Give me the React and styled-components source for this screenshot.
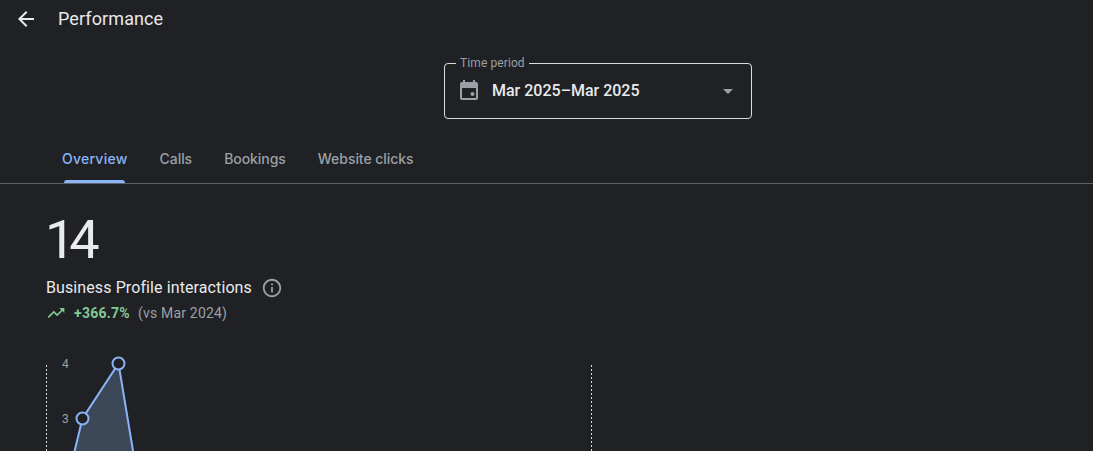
import React from "react";
import styled, { createGlobalStyle } from "styled-components";

const Global = createGlobalStyle`
  html, body { margin: 0; padding: 0; height: 100%; background: #202124; overflow: hidden; }
  body { font-family: Roboto, "Liberation Sans", sans-serif; }
`;

const Page = styled.div`
  width: 1093px;
  height: 451px;
  overflow: hidden;
  background: #202124;
  color: #e8eaed;
  display: flex;
  flex-direction: column;
`;

const Header = styled.header`
  display: flex;
  align-items: center;
  height: 38px;
  padding-left: 14px;
  gap: 20px;
  flex: none;
`;

const BackIcon = styled.svg`
  width: 24px;
  height: 24px;
  fill: #e8eaed;
  display: block;
`;

const Title = styled.h1`
  margin: 0;
  font: 400 18px/24px Roboto, sans-serif;
  letter-spacing: 0.1px;
  color: #e8eaed;
`;

const PeriodRow = styled.div`
  display: flex;
  padding: 25px 0 0 444px;
  flex: none;
`;

const PeriodBox = styled.div`
  position: relative;
  width: 308px;
  height: 56px;
  box-sizing: border-box;
  border: 1px solid #dadce0;
  border-radius: 4px;
  display: flex;
  align-items: center;
  padding: 0 12px;
`;

const PeriodLabel = styled.span`
  position: absolute;
  left: 11px;
  top: -9px;
  padding: 0 4px;
  background: #202124;
  font: 400 12px/16px Roboto, sans-serif;
  letter-spacing: 0.1px;
  color: #9aa0a6;
`;

const CalendarIcon = styled.svg`
  width: 24px;
  height: 24px;
  fill: #9aa0a6;
  flex: none;
  display: block;
`;

const PeriodValue = styled.span`
  margin-left: 11px;
  flex: 1;
  font: 500 16px/24px Roboto, sans-serif;
  color: #e8eaed;
`;

const Caret = styled.span`
  width: 0;
  height: 0;
  margin-right: 6px;
  border-left: 5px solid transparent;
  border-right: 5px solid transparent;
  border-top: 5px solid #9aa0a6;
`;

const Tabs = styled.nav`
  display: flex;
  height: 65px;
  padding-left: 46px;
  box-sizing: border-box;
  border-bottom: 1px solid #5f6368;
  flex: none;
`;

const Tab = styled.div`
  position: relative;
  padding: 30px 16px 0;
  display: flex;
  align-items: flex-start;
  font: 500 14px/20px Inter, Roboto, sans-serif;
  letter-spacing: ${(p) => (p.$active ? "0.25px" : "-0.05px")};
  color: ${(p) => (p.$active ? "#8ab4f8" : "#9aa0a6")};
`;

const TabBar = styled.span`
  position: absolute;
  left: 18px;
  right: 19px;
  bottom: 0;
  height: 3px;
  border-radius: 3px 3px 0 0;
  background: #8ab4f8;
`;

const Summary = styled.section`
  padding: 26px 0 0 46px;
  flex: none;
`;

const BigNumber = styled.div`
  font: 400 54px/60px Roboto, sans-serif;
  letter-spacing: -6px;
  margin-left: -1px;
  color: #e8eaed;
`;

const MetricRow = styled.div`
  display: flex;
  align-items: center;
  margin-top: 6px;
  height: 24px;
  gap: 9px;
`;

const MetricName = styled.span`
  font: 400 16px/24px Roboto, sans-serif;
  letter-spacing: 0.1px;
  color: #e8eaed;
`;

const InfoIcon = styled.svg`
  width: 22px;
  height: 22px;
  fill: #9aa0a6;
  display: block;
`;

const TrendRow = styled.div`
  display: flex;
  align-items: center;
  height: 20px;
  margin-top: 3px;
  font: 400 14px/20px Roboto, sans-serif;
  letter-spacing: 0.25px;
`;

const TrendIcon = styled.svg`
  width: 20px;
  height: 20px;
  fill: #81c995;
  display: block;
`;

const TrendValue = styled.span`
  margin-left: 8px;
  font-weight: 700;
  color: #81c995;
`;

const TrendNote = styled.span`
  margin-left: 8px;
  letter-spacing: 0.2px;
  color: #9aa0a6;
`;

const Chart = styled.svg`
  display: block;
  width: 1093px;
  height: 451px;
  flex: none;
  margin-top: 14px;
`;

const ChartLabel = styled.text`
  font: 400 12px Roboto, sans-serif;
  fill: #9aa0a6;
`;

export default function App() {
  return (
    <Page>
      <Global />
      <Header>
        <BackIcon viewBox="0 0 24 24">
          <path d="M20 11H7.83l5.59-5.59L12 4l-8 8 8 8 1.41-1.41L7.83 13H20v-2z" />
        </BackIcon>
        <Title>Performance</Title>
      </Header>
      <PeriodRow>
        <PeriodBox>
          <PeriodLabel>Time period</PeriodLabel>
          <CalendarIcon viewBox="0 0 24 24">
            <path d="M16 1v2H8V1H6v2H5c-1.1 0-2 .9-2 2v14c0 1.1.9 2 2 2h14c1.1 0 2-.9 2-2V5c0-1.1-.9-2-2-2h-1V1h-2zm3 18H5V9h14v10z" />
            <circle cx="15.5" cy="15" r="2" />
          </CalendarIcon>
          <PeriodValue>Mar 2025–Mar 2025</PeriodValue>
          <Caret />
        </PeriodBox>
      </PeriodRow>
      <Tabs>
        <Tab $active>
          Overview
          <TabBar />
        </Tab>
        <Tab>Calls</Tab>
        <Tab>Bookings</Tab>
        <Tab>Website clicks</Tab>
      </Tabs>
      <Summary>
        <BigNumber>14</BigNumber>
        <MetricRow>
          <MetricName>Business Profile interactions</MetricName>
          <InfoIcon viewBox="0 0 24 24">
            <path d="M11 7h2v2h-2V7zm0 4h2v6h-2v-6zm1-9C6.48 2 2 6.48 2 12s4.48 10 10 10 10-4.48 10-10S17.52 2 12 2zm0 18c-4.41 0-8-3.59-8-8s3.59-8 8-8 8 3.59 8 8-3.59 8-8 8z" />
          </InfoIcon>
        </MetricRow>
        <TrendRow>
          <TrendIcon viewBox="0 0 24 24">
            <path d="M16 6l2.29 2.29-4.88 4.88-4-4L2 16.59 3.41 18l6-6 4 4 6.3-6.29L22 12V6h-6z" />
          </TrendIcon>
          <TrendValue>+366.7%</TrendValue>
          <TrendNote>(vs Mar 2024)</TrendNote>
        </TrendRow>
      </Summary>
      <Chart viewBox="0 0 1093 451">
        <g transform="translate(0 -337)">
          <line x1="46.5" y1="365" x2="46.5" y2="451" stroke="#dadce0" strokeDasharray="2 2" />
          <line x1="591.5" y1="365" x2="591.5" y2="451" stroke="#dadce0" strokeDasharray="2 2" />
          <ChartLabel x="62" y="368">4</ChartLabel>
          <ChartLabel x="62" y="423">3</ChartLabel>
          <path d="M70 470L82.5 418.5L118.5 363.5L136.2 470Z" fill="#3c4758" />
          <path d="M70 470L82.5 418.5L118.5 363.5L136.2 470" fill="none" stroke="#8ab4f8" strokeWidth="2" />
          <circle cx="82.5" cy="418.5" r="6" fill="#202124" stroke="#8ab4f8" strokeWidth="2" />
          <circle cx="118.5" cy="363.5" r="6" fill="#202124" stroke="#8ab4f8" strokeWidth="2" />
        </g>
      </Chart>
    </Page>
  );
}
